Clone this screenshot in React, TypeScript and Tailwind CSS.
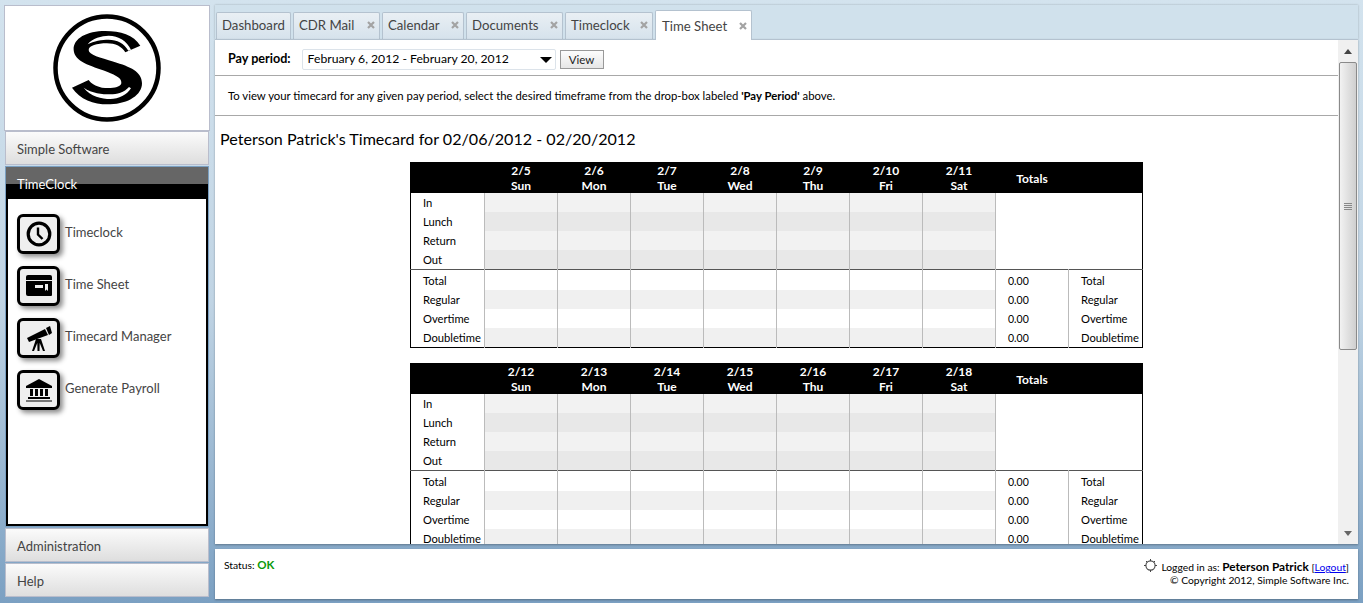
import type { ReactNode } from 'react'

const font = "font-['Lato','Open_Sans',sans-serif]"

const navItemClass =
  'flex items-center pl-[11px] pt-[4px] text-[13px] text-[#444] border border-[#b9bdcc] bg-gradient-to-b from-[#fbfbfb] to-[#dedede]'

function Logo() {
  return (
    <svg width="112" height="112" viewBox="0 0 112 112">
      <circle cx="56" cy="56" r="51.5" fill="none" stroke="#000" strokeWidth="4.5" />
      <g transform="translate(16 16.3) scale(0.3333)">
        <path
          d="M220 52 C200 20 160 8 115 8 C60 8 18 30 20 65 C22 100 70 112 120 130 C150 142 165 150 163 165 C160 178 130 182 105 178 C85 174 72 165 65 155 L15 178 C40 215 85 230 130 228 C185 226 225 200 225 165 C225 130 190 115 140 100 C100 88 65 80 65 65 C65 52 90 45 120 45 C145 45 165 55 175 72 Z"
          fill="#000"
        />
        <path d="M62 48 C75 30 105 22 125 22 C155 22 180 38 192 64 L184 67 C172 45 150 34 125 34 C105 34 80 38 62 48 Z" fill="#fff" />
        <path d="M50 178 C70 205 105 212 130 212 C155 212 180 200 192 180 L186 176 C172 192 150 198 130 198 C105 198 75 195 50 178 Z" fill="#fff" />
      </g>
    </svg>
  )
}

function ClockIcon() {
  return (
    <svg width="26" height="26" viewBox="0 0 26 26">
      <circle cx="13" cy="13" r="10.8" fill="none" stroke="#000" strokeWidth="3.2" />
      <path d="M12 6.5 V13.5 L16.5 18" fill="none" stroke="#000" strokeWidth="2.4" />
    </svg>
  )
}

function SheetIcon() {
  return (
    <svg width="28" height="22" viewBox="0 0 28 22">
      <path d="M1 2 Q1 0 3 0 H25 Q27 0 27 2 V5 H1 Z" fill="#000" />
      <path
        d="M1 6 H27 V20 Q27 21 26 21 H3 Q1 21 1 19 Z M10 10 V13 H18 V10 Z M20 9 V16 L21.5 14.5 L23 16 V9 Z"
        fill="#000"
        fillRule="evenodd"
      />
    </svg>
  )
}

function TelescopeIcon() {
  return (
    <svg width="26" height="26" viewBox="0 0 26 26">
      <path d="M1 13 L19 4 L22 10 L3 17 Z" fill="#000" />
      <path d="M20 3 L24 1 L26 8 L23 10 Z" fill="#000" />
      <path d="M10 14 H15 L19 26 H17 L13.7 18 L13.5 26 H11.5 L11.3 18 L8 26 H6 Z" fill="#000" />
    </svg>
  )
}

function BankIcon() {
  return (
    <svg width="26" height="23" viewBox="0 0 26 23">
      <path d="M13 0 L26 7 V9 H0 V7 Z" fill="#000" />
      <path d="M4 10 H7 V17 H4 Z M9 10 H12 V17 H9 Z M14 10 H17 V17 H14 Z M19 10 H22 V17 H19 Z" fill="#000" />
      <path d="M2 18 H24 V20 H2 Z M0 21.5 H26 V22.5 H0 Z" fill="#000" />
    </svg>
  )
}

function NavButton({ icon, label }: { icon: ReactNode; label: string }) {
  return (
    <div className="flex h-[52px] items-start">
      <div className="flex h-[40px] w-[43px] items-center justify-center rounded-[6px] border-[3px] border-black bg-[#efefef] shadow-[3px_3px_5px_rgba(0,0,0,0.45)]">
        {icon}
      </div>
      <span className="ml-[5px] mt-[8px] text-[13px] leading-[20px] text-[#444]">{label}</span>
    </div>
  )
}

function Sidebar() {
  return (
    <aside className="flex w-[206px] shrink-0 flex-col">
      <div className="flex h-[126px] items-center justify-center border border-[#b9bdcc] bg-white pr-px">
        <Logo />
      </div>
      <div className={`${navItemClass} mx-px h-[34px]`}>Simple Software</div>
      <div className="mx-px mt-[1px] flex h-[361px] flex-col border border-[#7ba0c2] bg-black">
        <div className="relative h-[32px] shrink-0">
          <div className="h-[17px] bg-[#666]" />
          <span className="absolute left-[11px] top-[7px] text-[13px] leading-[20px] text-white">TimeClock</span>
        </div>
        <div className="mx-[2px] mb-[2px] flex flex-1 flex-col bg-white pl-[9px] pt-[15px]">
          <NavButton icon={<ClockIcon />} label="Timeclock" />
          <NavButton icon={<SheetIcon />} label="Time Sheet" />
          <NavButton icon={<TelescopeIcon />} label="Timecard Manager" />
          <NavButton icon={<BankIcon />} label="Generate Payroll" />
        </div>
      </div>
      <div className={`${navItemClass} mx-px mt-px h-[34px]`}>Administration</div>
      <div className={`${navItemClass} mx-px mt-px h-[34px]`}>Help</div>
    </aside>
  )
}

const tabs = [
  { label: 'Dashboard', w: 'w-[75px]', close: false },
  { label: 'CDR Mail', w: 'w-[87px]', close: true },
  { label: 'Calendar', w: 'w-[82px]', close: true },
  { label: 'Documents', w: 'w-[97px]', close: true },
  { label: 'Timeclock', w: 'w-[88px]', close: true },
]

function CloseX() {
  return (
    <svg width="8" height="8" viewBox="0 0 8 8" className="mb-[2px]">
      <path d="M1 1 L7 7 M7 1 L1 7" stroke="#a3a3a3" strokeWidth="2.2" />
    </svg>
  )
}

function Tabs() {
  return (
    <div className="flex h-[30px] shrink-0 items-end gap-[2px] pl-[1px]">
      {tabs.map((t) => (
        <div
          key={t.label}
          className={`${t.w} flex h-[27px] items-center justify-between rounded-t-[2px] border border-b-0 border-[#b4c2cf] bg-gradient-to-b from-[#e9eff4] to-[#d6e2ec] pl-[5px] pr-[4px] text-[13.2px] text-[#444]`}
        >
          <span>{t.label}</span>
          {t.close && <CloseX />}
        </div>
      ))}
      <div className="relative z-10 mb-[-1px] flex h-[30px] w-[97px] items-center justify-between rounded-t-[2px] border border-b-0 border-[#b4c2cf] bg-white pl-[6px] pr-[4px] pt-[2px] text-[13.2px] text-[#444]">
        <span>Time Sheet</span>
        <CloseX />
      </div>
    </div>
  )
}

function DayHeader({ date, day }: { date: string; day: string }) {
  return (
    <th className="w-[73px] p-0 text-center align-top text-[12px] font-bold leading-[15px] text-white">
      {date}
      <br />
      {day}
    </th>
  )
}

const topRows = ['In', 'Lunch', 'Return', 'Out']
const bottomRows = ['Total', 'Regular', 'Overtime', 'Doubletime']
const dayCols = [0, 1, 2, 3, 4, 5, 6]

function WeekTable({ dates }: { dates: string[] }) {
  const days = ['Sun', 'Mon', 'Tue', 'Wed', 'Thu', 'Fri', 'Sat']
  return (
    <table className="w-[733px] table-fixed border-collapse border border-black text-[11.2px] text-black">
      <thead>
        <tr className="h-[30px] bg-black">
          <th className="w-[74px] p-0" />
          {dates.map((d, i) => (
            <DayHeader key={d} date={d} day={days[i]} />
          ))}
          <th className="w-[73px] p-0 pt-[2px] text-center text-[12px] font-bold text-white">Totals</th>
          <th className="p-0" />
        </tr>
      </thead>
      <tbody>
        {topRows.map((r, ri) => (
          <tr key={r} className="h-[19px]">
            <td className="p-0 pl-[12px] leading-[19px]">{r}</td>
            {dayCols.map((c) => (
              <td
                key={c}
                className={`border-l border-[#bbb] p-0 ${ri % 2 === 0 ? 'bg-[#f2f2f2]' : 'bg-[#e8e8e8]'}`}
              />
            ))}
            <td className="border-l border-[#bbb] p-0" />
            <td className="p-0" />
          </tr>
        ))}
        {bottomRows.map((r, ri) => (
          <tr key={r} className={`${ri === 0 ? 'h-[20px] border-t border-[#555]' : 'h-[19px]'}`}>
            <td className={`overflow-visible whitespace-nowrap p-0 pl-[12px] leading-[19px] ${ri === 0 ? 'pt-[1px]' : ''}`}>{r}</td>
            {dayCols.map((c) => (
              <td key={c} className={`border-l border-[#bbb] p-0 ${ri % 2 === 1 ? 'bg-[#f0f0f0]' : ''}`} />
            ))}
            <td className={`border-l border-[#bbb] p-0 pl-[12px] text-[10.5px] leading-[18px] ${ri === 0 ? 'pt-[2px]' : 'pt-[1px]'}`}>0.00</td>
            <td className={`whitespace-nowrap border-l border-[#bbb] p-0 pl-[12px] leading-[19px] ${ri === 0 ? 'pt-[1px]' : ''}`}>{r}</td>
          </tr>
        ))}
      </tbody>
    </table>
  )
}

function Scrollbar() {
  return (
    <div className="flex w-[20px] shrink-0 flex-col items-center bg-[#f0f0f0]">
      <div className="flex h-[22px] shrink-0 items-center justify-center">
        <div className="h-0 w-0 border-x-[4px] border-b-[5px] border-x-transparent border-b-[#444]" />
      </div>
      <div className="flex h-[288px] w-[18px] shrink-0 items-center justify-center rounded-[2px] border border-[#8a8a8a] bg-gradient-to-r from-[#f2f2f2] to-[#cfcfcf]">
        <div className="flex w-[8px] flex-col gap-px">
          <div className="h-px bg-[#888]" />
          <div className="h-px bg-[#888]" />
          <div className="h-px bg-[#888]" />
          <div className="h-px bg-[#888]" />
        </div>
      </div>
      <div className="flex-1" />
      <div className="flex h-[22px] shrink-0 items-center justify-center">
        <div className="h-0 w-0 border-x-[4px] border-t-[5px] border-x-transparent border-t-[#666]" />
      </div>
    </div>
  )
}

function Content() {
  return (
    <div className="flex min-h-0 flex-1 border-t border-[#b4c2cf] bg-white shadow-[0_1px_2px_rgba(0,0,0,0.3)]">
      <div className="min-w-0 flex-1 overflow-hidden">
        <div className="flex h-[36px] items-center border-b border-[#a8a8a8] pl-[13px] pt-[4px] text-[12.6px] text-black">
          <b className="font-bold">Pay period:</b>
          <div className="ml-[11px] flex h-[21px] w-[254px] items-center justify-between rounded-[2px] border border-[#dce3ea] pl-[5px] pr-[3px] text-[12.2px]">
            February 6, 2012 - February 20, 2012
            <span className="h-0 w-0 border-x-[6px] border-t-[6px] border-x-transparent border-t-black" />
          </div>
          <div className="ml-[4px] flex h-[19px] w-[44px] items-center justify-center border border-[#999] bg-gradient-to-b from-[#fdfdfd] to-[#e6e6e6] text-[11.5px] text-[#222]">
            View
          </div>
        </div>
        <div className="flex h-[40px] items-center border-b border-[#a8a8a8] pl-[13px] pt-[2px] text-[11.33px] text-black">
          <span>
            To view your timecard for any given pay period, select the desired timeframe from the drop-box labeled{' '}
            <b>'Pay Period'</b> above.
          </span>
        </div>
        <h1 className="ml-[5px] mt-[12px] text-[16.1px] font-normal leading-[22px] text-black">
          Peterson Patrick's Timecard for 02/06/2012 - 02/20/2012
        </h1>
        <div className="ml-[195px] mt-[12px] flex flex-col gap-[15px]">
          <WeekTable dates={['2/5', '2/6', '2/7', '2/8', '2/9', '2/10', '2/11']} />
          <WeekTable dates={['2/12', '2/13', '2/14', '2/15', '2/16', '2/17', '2/18']} />
        </div>
      </div>
      <Scrollbar />
    </div>
  )
}

function Footer() {
  return (
    <footer className="mt-[5px] flex h-[50px] shrink-0 items-start justify-between bg-white px-[9px] pt-[9px] text-[10.3px] leading-[14px] text-black shadow-[0_1px_2px_rgba(0,0,0,0.3)]">
      <div>
        Status: <b className="text-[11.5px] text-[#0a990a]">OK</b>
      </div>
      <div className="flex flex-col items-end pt-[1px] leading-[14px]">
        <div className="flex items-center">
          <svg width="13" height="13" viewBox="0 0 13 13" className="mb-[3px] mr-[4px]">
            <circle cx="6.5" cy="6.5" r="4.6" fill="none" stroke="#444" strokeWidth="1.1" />
            <path d="M6.5 0 V2 M6.5 11 V13 M0 6.5 H2 M11 6.5 H13 M2 2 L3.3 3.3 M11 2 L9.7 3.3" stroke="#444" strokeWidth="1" />
          </svg>
          <span>
            Logged in as: <b className="text-[11.8px]">Peterson Patrick</b> [<span className="text-[#0000ee] underline">Logout</span>]
          </span>
        </div>
        <div className="mt-[-2px]">© Copyright 2012, Simple Software Inc.</div>
      </div>
    </footer>
  )
}

export default function App() {
  return (
    <div className={`${font} flex h-[603px] w-[1363px] gap-[5px] overflow-hidden bg-gradient-to-b from-[#d3e3ee] via-[#c0d4e4] to-[#7ba0c2] pb-[4px] pl-[4px] pr-[5px] pt-[5px]`}>
      <Sidebar />
      <main className="flex min-w-0 flex-1 flex-col">
        <div className="shrink-0 bg-[#d0e1ec] pt-[4px] shadow-[0_0_2px_rgba(0,0,0,0.25)]">
          <Tabs />
        </div>
        <Content />
        <Footer />
      </main>
    </div>
  )
}
